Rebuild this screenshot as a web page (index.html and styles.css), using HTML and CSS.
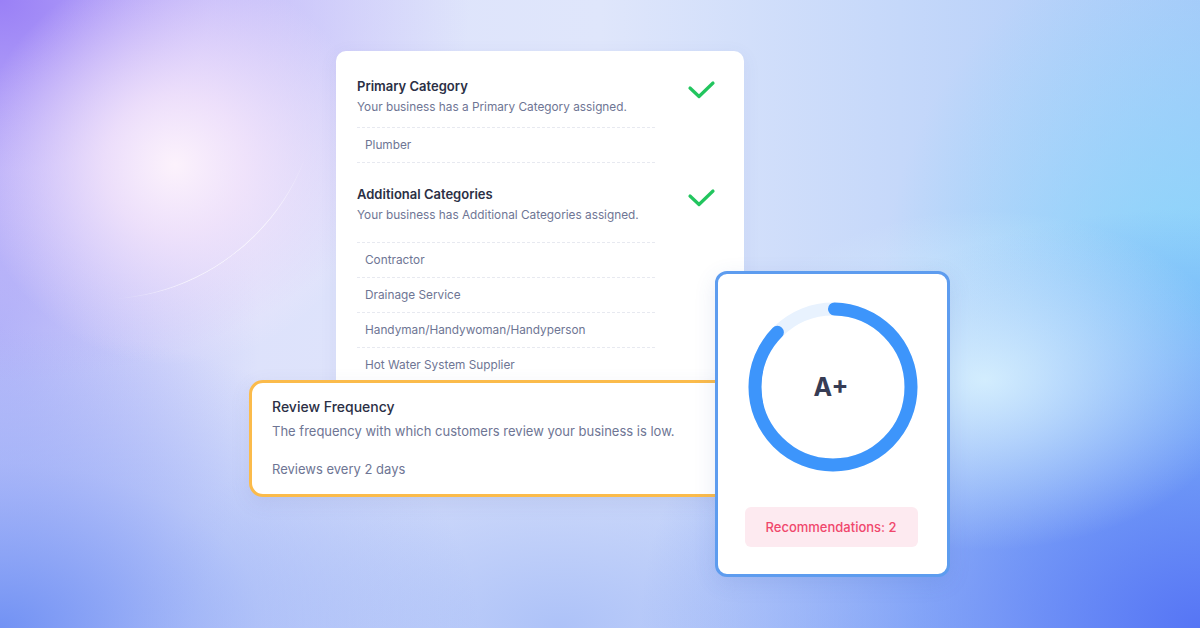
FILE: index.html
```html
<!DOCTYPE html>
<html>
<head>
  <title>Business Profile Score</title>
  <link rel="stylesheet" href="styles.css">
</head>
<body>
  <div class="stage">
    <div class="arc"></div>

    <div class="card checks">
      <div class="check-row">
        <div class="check-body">
          <div class="check-title">Primary Category</div>
          <div class="check-sub">Your business has a Primary Category assigned.</div>
          <ul class="cat-list first">
            <li>Plumber</li>
          </ul>
        </div>
        <svg class="tick" width="30" height="20" viewBox="0 0 30 20"><path d="M3 8 L12 16.5 L26 3" /></svg>
      </div>

      <div class="check-row second">
        <div class="check-body">
          <div class="check-title">Additional Categories</div>
          <div class="check-sub">Your business has Additional Categories assigned.</div>
          <ul class="cat-list">
            <li>Contractor</li>
            <li>Drainage Service</li>
            <li>Handyman/Handywoman/Handyperson</li>
            <li>Hot Water System Supplier</li>
          </ul>
        </div>
        <svg class="tick" width="30" height="20" viewBox="0 0 30 20"><path d="M3 8 L12 16.5 L26 3" /></svg>
      </div>
    </div>

    <div class="card review">
      <div class="review-title">Review Frequency</div>
      <div class="review-desc">The frequency with which customers review your business is low.</div>
      <div class="review-value">Reviews every 2 days</div>
    </div>

    <div class="card score">
      <div class="ring">
        <svg width="170" height="170" viewBox="0 0 170 170">
          <circle class="track" cx="85" cy="85" r="78" />
          <circle class="bar" cx="85" cy="85" r="78" transform="rotate(-90 85 85)" />
        </svg>
        <div class="grade">A+</div>
      </div>
      <div class="recs">Recommendations: 2</div>
    </div>
  </div>
</body>
</html>
```

FILE: styles.css
```css
* {
  box-sizing: border-box;
}
body {
  margin: 0;
  font-family: Inter, "Noto Sans", Arial, sans-serif;
}
.stage {
  position: relative;
  width: 1200px;
  height: 628px;
  overflow: hidden;
  padding: 51px 0 0 336px;
  background:
    radial-gradient(circle at 175px 165px, rgba(252, 242, 252, 1) 0, rgba(247, 232, 251, 0.8) 70px, rgba(238, 226, 251, 0) 200px),
    radial-gradient(ellipse 260px 170px at 985px 380px, rgba(222, 246, 255, 0.85), rgba(200, 238, 255, 0) 100%),
    radial-gradient(ellipse 470px 380px at 0 0, #9a80f6 0, rgba(178, 156, 249, 0.55) 45%, rgba(200, 190, 250, 0) 100%),
    radial-gradient(ellipse 560px 420px at 1200px 628px, #5675f5 0, rgba(98, 138, 246, 0.65) 50%, rgba(120, 160, 245, 0) 100%),
    radial-gradient(ellipse 480px 300px at 0 628px, #7292f4 0, rgba(130, 160, 246, 0.4) 55%, rgba(130, 160, 246, 0) 100%),
    radial-gradient(ellipse 320px 380px at 1200px 310px, #88d6fb, rgba(140, 215, 250, 0) 100%),
    radial-gradient(ellipse 260px 420px at 0 330px, rgba(170, 172, 248, 0.8), rgba(170, 172, 248, 0) 100%),
    radial-gradient(ellipse 420px 240px at 560px 628px, #adc2f8, rgba(170, 190, 248, 0) 100%),
    linear-gradient(to right, #dcdffb, #dfe6fb 50%, #abcaf9);
}
.arc {
  position: absolute;
  left: -120px;
  top: -140px;
  width: 440px;
  height: 440px;
  border-radius: 50%;
  border: 1.5px solid transparent;
  border-bottom-color: rgba(255, 255, 255, 0.65);
  transform: rotate(-37deg);
  -webkit-mask-image: linear-gradient(to right, transparent 100px, #000 170px, #000 270px, transparent 340px);
  mask-image: linear-gradient(to right, transparent 100px, #000 170px, #000 270px, transparent 340px);
}
.card {
  background: #fff;
}

/* category checks */
.checks {
  position: relative;
  width: 408px;
  border-radius: 10px;
  padding: 26px 27px 26px 21px;
  box-shadow: 0 4px 18px rgba(80, 90, 160, 0.08);
}
.check-row {
  display: flex;
  justify-content: space-between;
  align-items: flex-start;
}
.check-row.second {
  margin-top: 22px;
}
.check-body {
  width: 298px;
}
.check-title {
  font-size: 13px;
  line-height: 18px;
  font-weight: 600;
  color: #2b2f45;
}
.check-sub {
  margin-top: 3px;
  font-size: 11.8px;
  line-height: 18px;
  color: #6e7594;
}
.cat-list {
  list-style: none;
  margin: 18px 0 0 0;
  padding: 0;
}
.cat-list.first {
  margin-top: 11px;
}
.cat-list li {
  border-top: 1px dashed #e7e9f0;
  padding: 0 8px;
  line-height: 34px;
  font-size: 11.8px;
  color: #6e7594;
}
.cat-list li:last-child {
  border-bottom: 1px dashed #e7e9f0;
}
.tick {
  margin-top: 3px;
  fill: none;
  stroke: #22c55e;
  stroke-width: 3.2;
  stroke-linecap: round;
  stroke-linejoin: round;
}

/* review card */
.review {
  position: absolute;
  left: 249px;
  top: 380px;
  width: 480px;
  height: 117px;
  border: 3px solid #fbbb4b;
  border-radius: 14px;
  padding: 14px 20px;
  box-shadow: 0 6px 20px rgba(80, 90, 160, 0.1);
}
.review-title {
  font-size: 14px;
  line-height: 20px;
  font-weight: 500;
  color: #2b2f45;
}
.review-desc {
  margin-top: 5px;
  font-size: 13px;
  line-height: 18px;
  color: #6e7594;
}
.review-value {
  margin-top: 20px;
  font-size: 13px;
  line-height: 18px;
  color: #6e7594;
}

/* score card */
.score {
  position: absolute;
  left: 715px;
  top: 271px;
  width: 235px;
  height: 306px;
  border: 3px solid #5d9cef;
  border-radius: 12px;
  padding-top: 28px;
  display: flex;
  flex-direction: column;
  align-items: center;
  box-shadow: 0 6px 22px rgba(60, 90, 170, 0.12);
}
.ring {
  display: grid;
  place-items: center;
}
.ring svg,
.ring .grade {
  grid-area: 1 / 1;
}
.ring circle {
  fill: none;
  stroke-width: 13;
}
.ring .track {
  stroke: #e8f2fe;
}
.ring .bar {
  stroke: #3d95fb;
  stroke-linecap: round;
  stroke-dasharray: 426 490;
  stroke-dashoffset: -1.5;
}
.grade {
  margin-right: 3px;
  font-size: 25px;
  font-weight: 700;
  color: #373c54;
}
.recs {
  margin-top: 35px;
  margin-right: 3px;
  width: 173px;
  height: 40px;
  border-radius: 6px;
  background: #fdeaf0;
  color: #f0476c;
  font-size: 13px;
  font-weight: 500;
  display: flex;
  align-items: center;
  justify-content: center;
}
```
